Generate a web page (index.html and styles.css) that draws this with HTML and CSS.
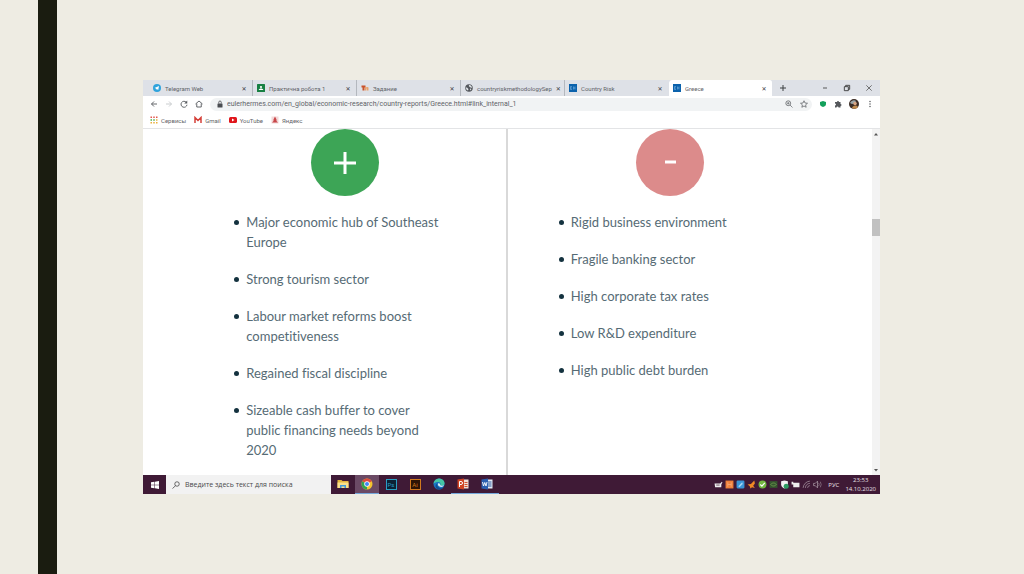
FILE: index.html
```html
<!DOCTYPE html>
<html lang="en">
<head>
    <meta charset="UTF-8">
    <meta name="viewport" content="width=device-width, initial-scale=1.0">
    <title>Greece</title>
    <link rel="stylesheet" href="styles.css">
</head>
<body>
    <div class="slide">
        <div class="stripe"></div>
        <div class="screen">
            <div class="tabs">
                <div class="tab">
                    <svg class="icon" viewBox="0 0 16 16"><circle cx="8" cy="8" r="8" fill="#2fa3dc"/><path d="M3 8l9-4-1.500 8-3-2-1.500 1.500-.5-3z" fill="#fff"/></svg>
                    <span class="tab-title">Telegram Web</span>
                    <button class="close" aria-label="Close tab">✕</button>
                </div>
                <div class="tab">
                    <svg class="icon" viewBox="0 0 16 16"><rect width="16" height="16" rx="1" fill="#188043"/><circle cx="8" cy="6" r="2.200" fill="#fff"/><path d="M3.500 12c0-4 9-4 9 0z" fill="#fff"/></svg>
                    <span class="tab-title">Практична робота 1</span>
                    <button class="close" aria-label="Close tab">✕</button>
                </div>
                <div class="tab">
                    <svg class="icon" viewBox="0 0 16 16"><path d="M1 3h8v4H7v6H3V7H1z" fill="#c9532b"/><path d="M8 6h3v1c2-2 4-1 4 1v5h-3v-4h-1v4H8z" fill="#e9a26b"/></svg>
                    <span class="tab-title">Задание</span>
                    <button class="close" aria-label="Close tab">✕</button>
                </div>
                <div class="tab">
                    <svg class="icon" viewBox="0 0 16 16"><circle cx="8" cy="8" r="7.500" fill="#54585d"/><path d="M2 7c2 0 3 1 4 2s1 2 0 4C3 12 2 10 2 7zM8 2c4 0 5 2 6 5-2 1-3 0-4-1S7 5 8 2zM10 9l3 1-3 3z" fill="#e4e7ec"/></svg>
                    <span class="tab-title">countryriskmethodologySep</span>
                    <button class="close" aria-label="Close tab">✕</button>
                </div>
                <div class="tab">
                    <svg class="icon" viewBox="0 0 16 16"><rect width="16" height="16" fill="#0b62ac"/><path d="M3 5h3M3 8h3M3 11h3M3 5v6M9 5v6M12 5v6M9 8h3" stroke="#8fc1e8" fill="none"/></svg>
                    <span class="tab-title">Country Risk</span>
                    <button class="close" aria-label="Close tab">✕</button>
                </div>
                <div class="tab active">
                    <svg class="icon" viewBox="0 0 16 16"><rect width="16" height="16" fill="#0b62ac"/><path d="M3 5h3M3 8h3M3 11h3M3 5v6M9 5v6M12 5v6M9 8h3" stroke="#8fc1e8" fill="none"/></svg>
                    <span class="tab-title">Greece</span>
                    <button class="close" aria-label="Close tab">✕</button>
                </div>
                <button class="new-tab" aria-label="New tab"><svg class="icon" viewBox="0 0 16 16"><path d="M8 2v12M2 8h12" stroke="#3c4043" stroke-width="2"/></svg></button>
                <div class="window-buttons">
                    <button aria-label="Minimize"><svg viewBox="0 0 12 12"><path d="M3 6h6" stroke="#444" stroke-width="1.300"/></svg></button>
                    <button aria-label="Restore"><svg viewBox="0 0 12 12"><path d="M2 4h6v6H2zM4 4V2h6v6H8" stroke="#333" stroke-width="1.300" fill="none"/></svg></button>
                    <button aria-label="Close"><svg viewBox="0 0 12 12"><path d="M2 2l8 8M10 2l-8 8" stroke="#555" stroke-width="1.200"/></svg></button>
                </div>
            </div>

            <div class="toolbar">
                <button aria-label="Back"><svg class="icon" viewBox="0 0 16 16"><path d="M14 8H3M8 3L3 8l5 5" stroke="#55585c" stroke-width="1.800" fill="none"/></svg></button>
                <button aria-label="Forward"><svg class="icon" viewBox="0 0 16 16"><path d="M2 8h11M8 3l5 5-5 5" stroke="#c4c7ca" stroke-width="1.800" fill="none"/></svg></button>
                <button aria-label="Reload"><svg class="icon" viewBox="0 0 16 16"><path d="M12.500 4.500a6 6 0 1 0 1.500 5" stroke="#55585c" stroke-width="1.800" fill="none"/><path d="M14.500 1v6h-6z" fill="#55585c"/></svg></button>
                <button aria-label="Home"><svg class="icon" viewBox="0 0 16 16"><path d="M1 8l7-6 7 6M3.500 7v7h9V7" stroke="#55585c" stroke-width="1.800" fill="none"/></svg></button>
                <div class="address">
                    <svg class="icon lock" viewBox="0 0 16 16"><rect x="3" y="7" width="10" height="8" rx="1" fill="#4a4d51"/><path d="M5.500 7V4.500a2.500 2.500 0 0 1 5 0V7" stroke="#4a4d51" stroke-width="1.600" fill="none"/></svg>
                    <input type="text" aria-label="Address" value="eulerhermes.com/en_global/economic-research/country-reports/Greece.html#link_internal_1">
                    <button aria-label="Zoom"><svg class="icon" viewBox="0 0 16 16"><circle cx="6.500" cy="6.500" r="4.800" stroke="#55585c" stroke-width="1.500" fill="none"/><path d="M10 10l5 5M4 6.500h5M6.500 4v5" stroke="#55585c" stroke-width="1.300"/></svg></button>
                    <button aria-label="Bookmark this page"><svg class="icon" viewBox="0 0 16 16"><path d="M8 1.500l2 4.500 5 .5-3.800 3.200L12.300 14.500 8 12l-4.300 2.500 1.100-4.800L1 6.500 6 6z" stroke="#55585c" stroke-width="1.400" fill="none"/></svg></button>
                </div>
                <button aria-label="Protection"><svg class="icon" viewBox="0 0 16 16"><path d="M8 2l6 2v4c0 4-3 5-6 6-3-1-6-2-6-6V4z" fill="#13a05b"/></svg></button>
                <button aria-label="Extensions"><svg class="icon" viewBox="0 0 16 16"><path d="M2 4h4a2 2 0 1 1 4 0h3v4a2 2 0 1 1 0 4v3H9a2 2 0 0 0-4 0H2v-4a2 2 0 0 0 0-4z" fill="#55585c"/></svg></button>
                <button aria-label="Profile"><svg class="avatar" viewBox="0 0 20 20"><circle cx="10" cy="10" r="10" fill="#3b2c25"/><path d="M2 8c3-6 9-7 12-4l-3 5-5 1z" fill="#9aa5a8"/><circle cx="12" cy="9" r="3.500" fill="#d8a583"/><path d="M6 18c1-6 10-7 12-2-3 4-8 5-12 2z" fill="#c08a4c"/></svg></button>
                <button aria-label="Menu"><svg class="icon" viewBox="0 0 16 16"><g fill="#55585c"><circle cx="8" cy="3" r="1.500"/><circle cx="8" cy="8" r="1.500"/><circle cx="8" cy="13" r="1.500"/></g></svg></button>
            </div>

            <nav class="bookmarks">
                <a href="#"><svg class="icon" viewBox="0 0 16 16"><path d="M1 1h3v3H1zM6.500 1h3v3h-3zM12 1h3v3h-3z" fill="#e2574c"/><path d="M1 6.500h3v3H1zM6.500 6.500h3v3h-3z" fill="#4caf50"/><path d="M12 6.500h3v3h-3zM1 12h3v3H1zM6.500 12h3v3h-3zM12 12h3v3h-3z" fill="#eab13c"/></svg>Сервисы</a>
                <a href="#"><svg class="icon" viewBox="0 0 16 16"><path d="M2 14V3l6 6 6-6v11" stroke="#d5413a" stroke-width="3" fill="none"/></svg>Gmail</a>
                <a href="#"><svg class="icon" viewBox="0 0 16 16"><rect y="2" width="16" height="12" rx="3" fill="#e0151b"/><path d="M6 5l5 3-5 3z" fill="#fff"/></svg>YouTube</a>
                <a href="#"><svg class="icon" viewBox="0 0 16 16"><rect x="1" y="1" width="14" height="14" fill="#f3d9d9"/><path d="M8 1l3 6v3l3 3H2l3-3V7z" fill="#c8474a"/></svg>Яндекс</a>
            </nav>

            <div class="viewport">
                <main class="columns">
                    <section class="column pros">
                        <div class="badge plus"><svg viewBox="0 0 68 68"><path d="M34 23v22M23 34h22" stroke="#fff" stroke-width="3"/></svg></div>
                        <ul>
                            <li>Major economic hub of Southeast Europe</li>
                            <li>Strong tourism sector</li>
                            <li>Labour market reforms boost competitiveness</li>
                            <li>Regained fiscal discipline</li>
                            <li>Sizeable cash buffer to cover public financing needs beyond 2020</li>
                        </ul>
                    </section>
                    <section class="column cons">
                        <div class="badge minus"><svg viewBox="0 0 68 68"><path d="M29 33h11" stroke="#fff" stroke-width="3"/></svg></div>
                        <ul>
                            <li>Rigid business environment</li>
                            <li>Fragile banking sector</li>
                            <li>High corporate tax rates</li>
                            <li>Low R&amp;D expenditure</li>
                            <li>High public debt burden</li>
                        </ul>
                    </section>
                </main>
                <div class="scrollbar">
                    <button aria-label="Scroll up"><svg viewBox="0 0 8 8"><path d="M2 5.500L4 3l2 2.500z" fill="#555"/></svg></button>
                    <div class="track"><div class="thumb"></div></div>
                    <button aria-label="Scroll down"><svg viewBox="0 0 8 8"><path d="M2 3l2 2.500L6 3z" fill="#555"/></svg></button>
                </div>
            </div>

            <footer class="taskbar">
                <button class="start" aria-label="Start"><svg class="icon" viewBox="0 0 16 16"><path d="M0 2.500l7-1v6H0zM8 1.300L16 0v7.500H8zM0 8.500h7v6l-7-1zM8 8.500h8V16l-8-1.300z" fill="#fff"/></svg></button>
                <label class="search">
                    <svg viewBox="0 0 16 16"><circle cx="10" cy="6" r="4.500" stroke="#333" stroke-width="1.400" fill="none"/><path d="M7 9.500L1 15" stroke="#333" stroke-width="1.400"/></svg>
                    <input type="text" aria-label="Поиск" placeholder="Введите здесь текст для поиска">
                </label>
                <div class="apps">
                    <button aria-label="Explorer"><svg viewBox="0 0 24 24"><path d="M1 4h8l2 2h12v14H1z" fill="#e5b73f"/><path d="M1 9h22v11H1z" fill="#fae08a"/><path d="M6 14h12v6h-3v-3H9v3H6z" fill="#4299d8"/></svg></button>
                    <button class="open current" aria-label="Chrome"><svg viewBox="0 0 24 24"><circle cx="12" cy="12" r="11" fill="#f4c430"/><path d="M12 12L2.500 6.500A11 11 0 0 1 21.500 6.500z" fill="#dd4b3e"/><path d="M12 12L2.500 6.500A11 11 0 0 0 12 23z" fill="#2fa351"/><circle cx="12" cy="12" r="5.500" fill="#fff"/><circle cx="12" cy="12" r="4" fill="#4285f4"/></svg></button>
                    <button aria-label="Photoshop"><span class="app-box ps">Ps</span></button>
                    <button aria-label="Illustrator"><span class="app-box ai">Ai</span></button>
                    <button aria-label="Edge"><svg viewBox="0 0 24 24"><circle cx="12" cy="12" r="11" fill="#1976c5"/><path d="M1 12C2 3 9 1 13 1c7 1 11 6 10 11-1 4-7 4-9 2 3-4-1-7-5-6-4 0-7 2-8 4z" fill="#45c6a5"/><path d="M9 11c-2 4 1 9 7 9 2 0 4-1 5-2-3 5-9 6-13 4-4-3-4-9 1-11z" fill="#124f92"/><path d="M10 11c3-2 5 1 4 3 2 2 6 2 8 0-1 4-6 5-9 3-2-1-4-3-3-6z" fill="#d9edf5"/></svg></button>
                    <button class="open" aria-label="PowerPoint"><svg viewBox="0 0 24 24"><path d="M12 3h11v18H12z" fill="#f3ddd5"/><path d="M15 8h6v2h-6zM15 12h6v2h-6zM15 16h6v2h-6z" fill="#d35230"/><path d="M1 3l13-2v22L1 21z" fill="#d04424"/><path d="M5 18V7h3a3 3 0 0 1 0 6H5" stroke="#fff" stroke-width="2" fill="none"/></svg></button>
                    <button class="open" aria-label="Word"><svg viewBox="0 0 24 24"><path d="M12 3h11v18H12z" fill="#e2eaf6"/><path d="M14 7h7v2h-7zM14 11h7v2h-7zM14 15h7v2h-7z" fill="#2b579a"/><path d="M1 3l13-2v22L1 21z" fill="#2b5fb0"/><path d="M3 8l2 8 2.500-7L10 16l2-8" stroke="#fff" stroke-width="1.800" fill="none"/></svg></button>
                </div>
                <div class="tray">
                    <svg viewBox="0 0 16 16"><path d="M1 6h10l3-3 1 1-2 4v5H2z" fill="#eee"/><path d="M4 9h6" stroke="#5a3a50" stroke-width="1.500"/></svg>
                    <svg viewBox="0 0 16 16"><rect x="1" y="1" width="14" height="14" fill="#f0803a"/><path d="M5 4v8M11 4v8M5 8h6" stroke="#f6a877" stroke-width="1.500"/></svg>
                    <svg viewBox="0 0 16 16"><rect x="1" y="1" width="14" height="14" rx="2" fill="#3a94d6"/><path d="M4 11l7-7 1 3-6 6z" fill="#a9d5f2"/></svg>
                    <svg viewBox="0 0 16 16"><path d="M1 8l6-1 6-6 1 5-3 4 3 4-5-1-3 2-1-4z" fill="#f08a24"/></svg>
                    <svg viewBox="0 0 16 16"><circle cx="8" cy="8" r="7" fill="#72b840"/><path d="M4 8l3 3 5-6" stroke="#fff" stroke-width="2" fill="none"/></svg>
                    <svg viewBox="0 0 16 16"><rect x="1" y="2" width="14" height="12" fill="#35552f"/><path d="M3 8c3-4 8-3 10 0-3 4-8 3-10 0z" stroke="#6f9a4e" stroke-width="1.500" fill="none"/></svg>
                    <svg viewBox="0 0 16 16"><path d="M2 2l6-1 6 1v6c0 4-3 6-6 7-3-1-6-3-6-7z" fill="#f2f2f2"/><circle cx="11" cy="11" r="4.500" fill="#2d9c62"/></svg>
                    <svg viewBox="0 0 16 16"><path d="M1 3h3v2h11v8H4V8H1z" fill="#eee"/></svg>
                    <svg viewBox="0 0 16 16"><path d="M2 14A13 13 0 0 1 14 2M6 14a8 8 0 0 1 8-8M10 14a4 4 0 0 1 4-4" stroke="#9b8795" stroke-width="1.500" fill="none"/></svg>
                    <svg viewBox="0 0 16 16"><path d="M1 6h3l4-4v12l-4-4H1z" stroke="#b5a5b0" stroke-width="1.200" fill="none"/><path d="M10 5q2 3 0 6M13 3q3 5 0 10" stroke="#9b8795" stroke-width="1.200" fill="none"/></svg>
                    <span class="lang">РУС</span>
                    <time class="clock" datetime="2020-10-14T23:53">23:53<br>14.10.2020</time>
                </div>
            </footer>
        </div>
    </div>
</body>
</html>
```
FILE: styles.css
```css
* {
    box-sizing: border-box;
}

body {
    margin: 0;
    background-color: #eeece3;
    font-family: Roboto, "Noto Sans", sans-serif;
    font-size: 6px;
    color: #5f6368;
}

button, input {
    font: inherit;
    color: inherit;
    border: none;
    padding: 0;
    background: none;
}

svg {
    display: block;
}

.slide {
    display: flex;
    min-height: 100vh;
    padding-left: 38px;
}

.stripe {
    width: 19px;
    background-color: #1a1c10;
}

.screen {
    flex: 1;
    display: flex;
    flex-direction: column;
    min-width: 0;
    margin: 80px 144px 80px 86px;
    background-color: #fff;
}

.icon {
    width: 8px;
    height: 8px;
    flex: none;
}

/* Browser tabs */
.tabs {
    display: flex;
    height: 16px;
    padding-left: 6px;
    background-color: #dee1e7;
}

.tab {
    flex: 0 1 104px;
    display: flex;
    align-items: center;
    gap: 4px;
    min-width: 0;
    padding: 0 4px;
    border-right: 1px solid #b4b8be;
    background-clip: padding-box;
}

.tab:nth-child(5) {
    border-right-color: transparent;
}

.tab.active {
    background-color: #fff;
    border-right-color: transparent;
    border-radius: 3px 3px 0 0;
}

.tab-title {
    flex: 1;
    white-space: nowrap;
}

.close {
    width: 8px;
    font-family: "DejaVu Sans", sans-serif;
    color: #3c4043;
}

.new-tab {
    padding: 0 6px;
}

.window-buttons {
    display: flex;
    margin-left: auto;
}

.window-buttons button {
    display: flex;
    justify-content: center;
    align-items: center;
    width: 22px;
}

.window-buttons svg {
    width: 8px;
}

/* Toolbar */
.toolbar {
    display: flex;
    align-items: center;
    gap: 7px;
    height: 16px;
    padding: 0 6px 0 7px;
}

.address {
    flex: 1;
    display: flex;
    align-items: center;
    gap: 7px;
    height: 13px;
    padding: 0 4px;
    border-radius: 7px;
    background-color: #f1f3f4;
}

.address .lock {
    margin-left: 2px;
}

.address input {
    flex: 1;
    min-width: 0;
    margin-left: -4px;
    font-size: 7px;
}

.avatar {
    width: 10px;
    height: 10px;
}

.bookmarks {
    display: flex;
    align-items: center;
    gap: 8px;
    height: 17px;
    padding: 0 7px;
    border-bottom: 1px solid #e3e4e6;
}

.bookmarks a {
    display: flex;
    align-items: center;
    gap: 3px;
    color: inherit;
    text-decoration: none;
}

/* Page content */
.viewport {
    flex: 1;
    display: flex;
}

.columns {
    flex: 1;
    display: grid;
    grid-template-columns: 1fr 1fr;
}

.column {
    display: flex;
    flex-direction: column;
    align-items: center;
    gap: 16px;
}

.pros {
    padding-left: 42px;
    border-right: 2px solid #d9d9d9;
}

.cons {
    padding-right: 40px;
}

.badge {
    width: 68px;
    height: 67px;
    border-radius: 50%;
}

.plus {
    background-color: #3da556;
}

.minus {
    background-color: #dc8b8b;
}

.column ul {
    display: flex;
    flex-direction: column;
    gap: 17px;
    width: 216px;
    margin: 0;
    padding: 0 8px 0 9px;
    font-family: Lato, sans-serif;
    font-size: 13px;
    font-variant-ligatures: none;
    line-height: 20px;
    color: #566b75;
    list-style: none;
}

.column li {
    position: relative;
}

.column li::before {
    content: "";
    position: absolute;
    left: -12px;
    top: 8px;
    width: 5px;
    height: 5px;
    border-radius: 50%;
    background-color: #14323f;
}

.scrollbar {
    display: flex;
    flex-direction: column;
    width: 8px;
    background-color: #f3f3f3;
}

.scrollbar button {
    height: 10px;
}

.track {
    flex: 1;
    padding-top: 80px;
}

.thumb {
    height: 17px;
    background-color: #c1c1c1;
}

/* Taskbar */
.taskbar {
    display: flex;
    height: 19px;
    background-color: #3f1a36;
}

.start {
    display: flex;
    justify-content: center;
    align-items: center;
    width: 23px;
}

.search {
    display: flex;
    align-items: center;
    gap: 5px;
    width: 165px;
    padding-left: 6px;
    background-color: #f2f2f2;
}

.search svg {
    width: 8px;
}

.search input {
    flex: 1;
    min-width: 0;
    font-family: "Open Sans", sans-serif;
    font-size: 7px;
}

.search input::placeholder {
    color: #4a4a4a;
}

.apps {
    display: flex;
}

.apps button {
    display: flex;
    justify-content: center;
    align-items: center;
    width: 24px;
    border-bottom: 1px solid transparent;
}

.apps svg {
    width: 12px;
}

.apps .open {
    border-bottom-color: #76a9dc;
}

.apps .current {
    background-color: #6b4a65;
}

.app-box {
    width: 11px;
    height: 11px;
    border: 1px solid;
    line-height: 9px;
    text-align: center;
}

.ps {
    background-color: #0b2236;
    color: #2b9fc4;
}

.ai {
    background-color: #2e1505;
    color: #d27a1e;
}

.tray {
    display: flex;
    align-items: center;
    gap: 2px;
    margin-left: auto;
    padding-right: 4px;
    font-family: "Open Sans", sans-serif;
    color: #e8e0e6;
}

.tray svg {
    width: 9px;
    height: 9px;
}

.lang {
    margin: 0 4px;
}

.clock {
    line-height: 9px;
    text-align: center;
    white-space: nowrap;
}
```
